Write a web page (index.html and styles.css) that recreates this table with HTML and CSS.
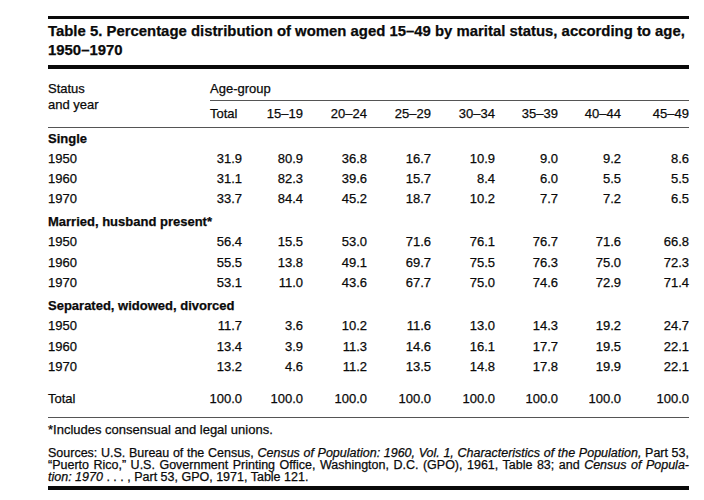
FILE: index.html
```html
<!DOCTYPE html>
<html lang="en">
<head>
<meta charset="utf-8">
<title>Table 5</title>
<link rel="stylesheet" href="styles.css">
</head>
<body>
<div class="page">
  <div class="rule-thick"></div>
  <h1 class="title">Table 5. Percentage distribution of women aged 15–49 by marital status, according to age,<br>1950–1970</h1>
  <div class="rule-thick rule-mid"></div>

  <div class="head">
    <div class="stub">Status<br>and year</div>
    <div class="ages">
      <div class="agelabel">Age-group</div>
      <div class="cols">
        <span class="first">Total</span><span>15–19</span><span>20–24</span><span>25–29</span><span>30–34</span><span>35–39</span><span>40–44</span><span>45–49</span>
      </div>
    </div>
  </div>

  <div class="body">
    <div class="group">
      <div class="heading">Single</div>
      <div class="row"><span>1950</span><span>31.9</span><span>80.9</span><span>36.8</span><span>16.7</span><span>10.9</span><span>9.0</span><span>9.2</span><span>8.6</span></div>
      <div class="row"><span>1960</span><span>31.1</span><span>82.3</span><span>39.6</span><span>15.7</span><span>8.4</span><span>6.0</span><span>5.5</span><span>5.5</span></div>
      <div class="row"><span>1970</span><span>33.7</span><span>84.4</span><span>45.2</span><span>18.7</span><span>10.2</span><span>7.7</span><span>7.2</span><span>6.5</span></div>
    </div>
    <div class="group">
      <div class="heading">Married, husband present*</div>
      <div class="row"><span>1950</span><span>56.4</span><span>15.5</span><span>53.0</span><span>71.6</span><span>76.1</span><span>76.7</span><span>71.6</span><span>66.8</span></div>
      <div class="row"><span>1960</span><span>55.5</span><span>13.8</span><span>49.1</span><span>69.7</span><span>75.5</span><span>76.3</span><span>75.0</span><span>72.3</span></div>
      <div class="row"><span>1970</span><span>53.1</span><span>11.0</span><span>43.6</span><span>67.7</span><span>75.0</span><span>74.6</span><span>72.9</span><span>71.4</span></div>
    </div>
    <div class="group">
      <div class="heading">Separated, widowed, divorced</div>
      <div class="row"><span>1950</span><span>11.7</span><span>3.6</span><span>10.2</span><span>11.6</span><span>13.0</span><span>14.3</span><span>19.2</span><span>24.7</span></div>
      <div class="row"><span>1960</span><span>13.4</span><span>3.9</span><span>11.3</span><span>14.6</span><span>16.1</span><span>17.7</span><span>19.5</span><span>22.1</span></div>
      <div class="row"><span>1970</span><span>13.2</span><span>4.6</span><span>11.2</span><span>13.5</span><span>14.8</span><span>17.8</span><span>19.9</span><span>22.1</span></div>
    </div>
    <div class="row total"><span>Total</span><span>100.0</span><span>100.0</span><span>100.0</span><span>100.0</span><span>100.0</span><span>100.0</span><span>100.0</span><span>100.0</span></div>
  </div>

  <p class="note">*Includes consensual and legal unions.</p>
  <div class="sources">
    <div class="line just">Sources: U.S. Bureau of the Census, <i>Census of Population: 1960, Vol. 1, Characteristics of the Population,</i> Part 53,</div>
    <div class="line just">“Puerto Rico,” U.S. Government Printing Office, Washington, D.C. (GPO), 1961, Table 83; and <i>Census of Popula-</i></div>
    <div class="line"><i>tion: 1970</i> . . . , Part 53, GPO, 1971, Table 121.</div>
  </div>
  <div class="rule-thick rule-bottom"></div>
</div>
</body>
</html>
```

FILE: styles.css
```css
html, body {
  margin: 0;
  background: #ffffff;
}

body {
  color: #0a0a0a;
  font-family: "Liberation Sans", Arial, Helvetica, sans-serif;
  font-size: 13px;
  -webkit-text-stroke: 0.25px #0a0a0a;
}

.page {
  width: 641px;
  margin-left: 48px;
  padding-top: 16px;
}

.rule-thick {
  height: 3px;
  background: #0a0a0a;
}

.rule-mid {
  margin-top: 5px;
  height: 4px;
}

.rule-bottom {
  margin-top: 3px;
  height: 4px;
}

.title {
  margin: 3px 0 0;
  font-size: 14.9px;
  line-height: 19px;
  font-weight: bold;
  white-space: nowrap;
}

.head {
  display: flex;
  padding-top: 11.5px;
  padding-bottom: 4.5px;
  border-bottom: 1px solid #555;
  line-height: 16px;
}

.stub {
  width: 162px;
  flex: none;
}

.ages {
  flex: 1;
}

.agelabel {
  padding-bottom: 3.5px;
  border-bottom: 1px solid #555;
}

.cols {
  display: grid;
  grid-template-columns: 32px 61px 64px 64px 64px 63px 63px 68px;
  padding-top: 5px;
}

.cols span {
  text-align: right;
}

.cols span.first {
  text-align: left;
}

.body {
  padding-top: 0;
  padding-bottom: 8px;
  border-bottom: 1px solid #555;
}

.group + .group {
  padding-top: 2px;
}

.heading {
  font-weight: bold;
  line-height: 21px;
}

.row {
  display: grid;
  grid-template-columns: 130px 64px 61px 64px 64px 64px 63px 63px 68px;
  line-height: 20.3px;
}

.row span {
  text-align: right;
}

.row span:first-child {
  text-align: left;
}

.row.total {
  padding-top: 11.4px;
}

.note {
  margin: 0;
  padding-top: 4px;
  line-height: 16px;
}

.sources {
  margin-top: 9px;
  font-size: 12.5px;
  line-height: 12px;
}

.line {
  white-space: nowrap;
}

.line.just {
  white-space: normal;
  text-align: justify;
  text-align-last: justify;
}
```
